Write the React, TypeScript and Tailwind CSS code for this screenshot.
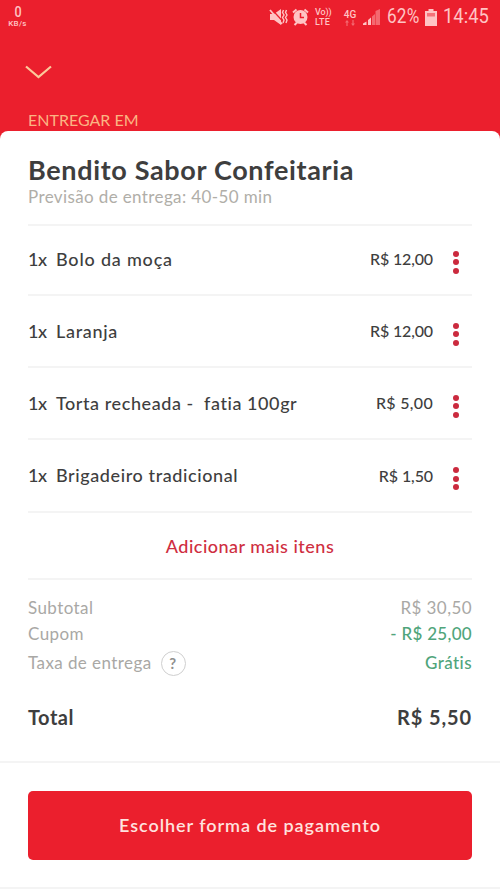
import React from 'react'

const items = [
  { name: 'Bolo da moça', price: 'R$ 12,00', row: 'h-[70px] pb-[2px]', nameSpacing: 'tracking-[0.8px]', priceSpacing: 'tracking-[-0.15px]' },
  { name: 'Laranja', price: 'R$ 12,00', row: 'h-[72px]', nameSpacing: 'tracking-[0.7px]', priceSpacing: 'tracking-[-0.15px]' },
  { name: 'Torta recheada -  fatia 100gr', price: 'R$ 5,00', row: 'h-[72px]', nameSpacing: 'tracking-[0.57px]', priceSpacing: 'tracking-[0.3px]' },
  { name: 'Brigadeiro tradicional', price: 'R$ 1,50', row: 'h-[73px]', nameSpacing: 'tracking-[0.6px]', priceSpacing: 'tracking-[-0.1px]' },
]

function StatusBar() {
  return (
    <div className="flex h-[34px] items-center justify-between pl-[7px] pr-[11px] font-[Roboto,sans-serif] text-[#ffc4c4]">
      <div className="flex w-[21px] flex-col items-center">
        <span className="scale-x-90 text-[14px] font-medium leading-[14px]">0</span>
        <span className="text-[8px] font-medium leading-[10px] tracking-[0.3px]">KB/s</span>
      </div>
      <div className="flex items-center">
        {/* Muted speaker */}
        <svg width="19" height="18" viewBox="0 0 19 18" fill="none" className="mr-[4px]">
          <path d="M1 6h4l7-5v16l-7-5H1z" fill="currentColor" />
          <path d="M2.500 1l11 12" stroke="#eb1f2d" strokeWidth="1.200" />
          <path d="M1 2l12 14" stroke="currentColor" strokeWidth="1.800" />
          <path d="M14.500 2L13.500 4.500 15 7l-1.500 2.500L15 12l-1 3M17.500 2l-1 2.500L18 7l-1.500 2.500L18 12l-1 3" stroke="currentColor" strokeWidth="1.400" />
        </svg>
        {/* Alarm */}
        <svg width="17" height="18" viewBox="0 0 17 18" fill="none" className="mr-[6px]">
          <path d="M1 4.500l3.500-3M16 4.500l-3.500-3M2.500 17l2.500-2.500M14.500 17L12 14.500" stroke="currentColor" strokeWidth="2" />
          <circle cx="8.500" cy="9" r="7" fill="currentColor" />
          <path d="M8.500 5v4.500H12" stroke="#eb1f2d" strokeWidth="1.500" />
        </svg>
        <div className="mr-[11px] flex w-[17px] flex-col text-[9px] font-medium leading-[11px]">
          <span className="tracking-[-0.1px]">Vo))</span>
          <span className="-mt-px tracking-[0.2px]">LTE</span>
        </div>
        <div className="mr-[6px] flex w-[14px] flex-col items-center">
          <span className="text-[10px] font-medium leading-[11px]">4G</span>
          <svg width="10" height="6" viewBox="0 0 10 6" fill="currentColor" opacity="0.45">
            <path d="M2 0L4 2.500H2.600V6H1.400V2.500H0zM8 6l2-2.500H8.600V0H7.400v3.500H6z" />
          </svg>
        </div>
        <svg width="17" height="16" viewBox="0 0 17 16" fill="currentColor" className="mr-[7px]">
          <path d="M0 14.500l3.500-2V16H0zM5 11l3-2.500V16H5z" />
          <path d="M9 7.500L12 5v11H9zM12.500 2L17 0v16h-4.500z" opacity="0.45" />
        </svg>
        <div className="w-[38px]">
          <span className="inline-block origin-left scale-x-[0.86] text-[20px] leading-6 tracking-[0.2px]">62%</span>
        </div>
        <svg width="12" height="17" viewBox="0 0 12 17" fill="currentColor" className="mr-[6px]">
          <path d="M3.500 0h5v2H12v15H0V2h3.500z" />
          <path d="M2 4h8v3.500H2z" fill="#eb1f2d" opacity="0.5" />
        </svg>
        <div className="w-[46px]">
          <span className="inline-block origin-left scale-x-[0.92] text-[20px] leading-6">14:45</span>
        </div>
      </div>
    </div>
  )
}

export default function App() {
  return (
    <div className="h-[889px] w-[500px] overflow-hidden bg-[#eb1f2d] font-[Lato,sans-serif] text-[#3e3e3e]">
      {/* Header */}
      <header className="h-[131px]">
        <StatusBar />
        <div className="px-[25px] pt-[31px]">
          <svg width="27" height="14" viewBox="0 0 27 14" fill="none" stroke="#fcc99b" strokeWidth="2.200">
            <path d="M1 1.500l12.500 10.500L26 1.500" />
          </svg>
        </div>
        <p className="pl-7 pt-[31px] text-[16px] leading-5 text-[#fbb583]">ENTREGAR EM</p>
      </header>

      {/* Order sheet */}
      <main className="h-[758px] rounded-t-lg bg-white">
        <div className="px-7">
          <div className="h-[95px] border-b-2 border-[#f4f4f4] pt-[23px]">
            <h1 className="whitespace-nowrap text-[27px] font-bold leading-8 tracking-[0.66px]">Bendito Sabor Confeitaria</h1>
            <p className="whitespace-nowrap pt-px text-[17px] leading-5 tracking-[0.38px] text-[#b0aea8]">Previsão de entrega: 40-50 min</p>
          </div>

          {items.map((item) => (
            <div key={item.name} className={`flex items-center border-b-2 border-[#f4f4f4] ${item.row}`}>
              <span className="w-7 text-[18px] font-medium tracking-[-0.5px]">1x</span>
              <span className={`flex-1 whitespace-pre text-[18px] font-medium ${item.nameSpacing}`}>{item.name}</span>
              <span className={`text-[16px] font-medium ${item.priceSpacing}`}>{item.price}</span>
              <span className="ml-5 mr-[13px] flex flex-col gap-[2.500px] pt-[6px]">
                <i className="size-[6px] rounded-full bg-[#cb2a3e]" />
                <i className="size-[6px] rounded-full bg-[#cb2a3e]" />
                <i className="size-[6px] rounded-full bg-[#cb2a3e]" />
              </span>
            </div>
          ))}

          <button className="flex h-[67px] w-full items-center justify-center border-b-2 border-[#f4f4f4] pt-[2px] text-[18px] font-medium tracking-[0.5px] text-[#cf2e41]">
            Adicionar mais itens
          </button>

          {/* Totals */}
          <div className="pt-[15px] text-[17px] tracking-[0.42px] text-[#a9a8a5]">
            <div className="flex h-[26px] items-center justify-between">
              <span>Subtotal</span>
              <span>R$ 30,50</span>
            </div>
            <div className="flex h-[26px] items-center justify-between">
              <span>Cupom</span>
              <span className="font-medium tracking-[0.3px] text-[#50a57b]">- R$ 25,00</span>
            </div>
            <div className="flex h-8 items-center justify-between">
              <span className="flex items-center">
                Taxa de entrega
                <span className="ml-[9px] flex size-[25px] items-center justify-center rounded-full border border-[#cfcfcf] text-[15px] font-bold text-[#8f8f8f]">?</span>
              </span>
              <span className="font-medium text-[#50a57b]">Grátis</span>
            </div>
          </div>
          <div className="flex h-[82px] items-center justify-between pb-[7px] text-[20px] font-bold tracking-[0.5px]">
            <span>Total</span>
            <span className="tracking-[0.9px]">R$ 5,50</span>
          </div>
        </div>

        {/* Payment */}
        <footer className="h-[128px] border-y-2 border-[#f4f4f4] px-7 pt-[28px]">
          <button className="h-[69px] w-full rounded-[5px] bg-[#eb1f2d] text-[18px] font-semibold tracking-[0.95px] text-[#ffe2df]">
            Escolher forma de pagamento
          </button>
        </footer>
      </main>
    </div>
  )
}
